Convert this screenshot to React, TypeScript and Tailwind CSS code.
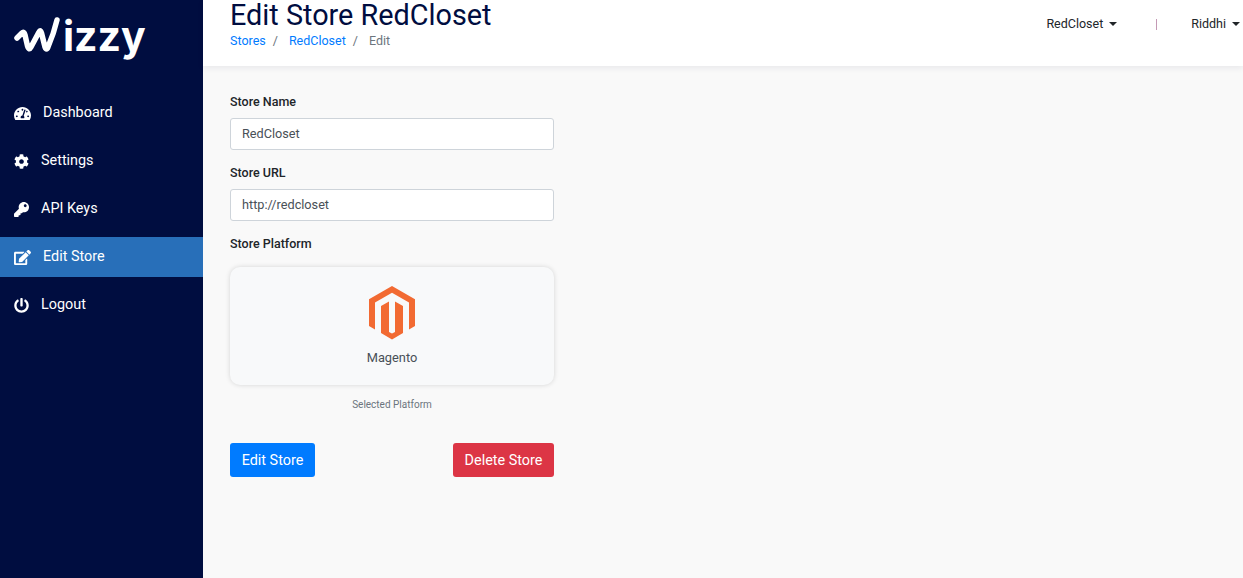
import { FaCog, FaEdit, FaKey, FaPowerOff, FaTachometerAlt } from "react-icons/fa";

const links = [
  { label: "Dashboard", icon: FaTachometerAlt, size: "text-[17px]" },
  { label: "Settings", icon: FaCog, size: "text-[15px]" },
  { label: "API Keys", icon: FaKey, size: "text-[15px]" },
  { label: "Edit Store", icon: FaEdit, size: "text-[17px]", active: true },
  { label: "Logout", icon: FaPowerOff, size: "text-[15px]" },
];

const Logo = () => (
  <div className="flex h-[93px] items-start pl-[14px] pt-[16px]">
    <svg width="50" height="40" viewBox="0 0 50 40" className="shrink-0" fill="none">
      <path
        d="M3 22 Q6 19 8 17 Q10 15 11 19 L13.500 30 Q15 35 17 31 L25 16 Q26.500 13 27.500 17 L31 31 Q32.500 35 34 31 Q40 17 43 4"
        stroke="white"
        strokeWidth="5.500"
        strokeLinecap="round"
        strokeLinejoin="round"
      />
    </svg>
    <span className="-ml-[1px] -mt-[8px] font-['Inter',sans-serif] text-[41px] font-bold leading-[56px] text-white">
      izzy
    </span>
  </div>
);

const Sidebar = () => (
  <div className="flex h-[578px] w-[203px] shrink-0 flex-col bg-[#000d40]">
    <Logo />
    <div className="flex flex-col">
      {links.map((link) => {
        const Icon = link.icon;
        return (
          <div
            key={link.label}
            className={`mb-2 flex h-[40px] items-center gap-3 pl-[14px] text-[14.400px] text-white ${
              link.active ? "bg-[#286fb9]" : ""
            }`}
          >
            <Icon className={link.size} />
            <span>{link.label}</span>
          </div>
        );
      })}
    </div>
  </div>
);

const Field = ({ label, value }: { label: string; value: string }) => (
  <div className="mb-[13px]">
    <div className="mb-[7px] pt-px text-[12.500px] font-medium leading-[18px] text-[#212529]">{label}</div>
    <div className="flex h-[32px] items-center rounded-[3px] border border-[#ced4da] bg-white px-[11px] text-[12.700px] text-[#495057]">
      {value}
    </div>
  </div>
);

const Caret = () => (
  <span className="ml-[6px] h-0 w-0 border-x-[4px] border-t-[4px] border-x-transparent border-t-[#212529]" />
);

const App = () => {
  return (
    <div className="flex h-[578px] w-[1243px] overflow-hidden bg-[#f9f9f9] font-['Roboto',sans-serif]">
      <Sidebar />
      <div className="flex-1">
        <div className="flex h-[66px] items-start justify-between bg-white pl-[27px] shadow-[0_2px_6px_rgba(20,20,60,0.08)]">
          <div>
            <h1 className="text-[28.800px] leading-[30px] text-[#000d40]">Edit Store RedCloset</h1>
            <div className="mt-[2px] flex text-[12.500px] leading-[18px]">
              <span className="text-[#007bff]">Stores</span>
              <span className="ml-[7px] text-[#6c757d]">/</span>
              <span className="ml-[11px] text-[#007bff]">RedCloset</span>
              <span className="ml-[7px] text-[#6c757d]">/</span>
              <span className="ml-[11px] text-[#6c757d]">Edit</span>
            </div>
          </div>
          <div className="flex items-center pr-[3px] pt-[15px] text-[12.500px] leading-[18px] text-[#212529]">
            <span>RedCloset</span>
            <Caret />
            <span className="ml-[39px] h-[11px] w-px bg-[#c49ab5]" />
            <span className="ml-[34px]">Riddhi</span>
            <Caret />
          </div>
        </div>
        <div className="ml-[27px] w-[324px] pt-[26px]">
          <Field label="Store Name" value="RedCloset" />
          <Field label="Store URL" value="http://redcloset" />
          <div className="mb-[14px] pt-px text-[12.500px] font-medium leading-[18px] text-[#212529]">Store Platform</div>
          <div className="flex h-[118px] w-[324px] flex-col items-center rounded-[10px] bg-[#f8f9fa] pt-[19px] shadow-[0_0_5px_rgba(0,0,0,0.15)]">
            <svg width="48" height="54" viewBox="0 0 48 54">
              <path
                fill="#f26a32"
                d="M24 0 L47 13.300 V40 L41 43.500 V16.500 L24 6.800 L7 16.500 V43.500 L1 40 V13.300 Z M13 20 L21 15.500 V46 L24 47.500 L27 46 V15.500 L35 20 V47 L24 53.500 L13 47 Z"
              />
            </svg>
            <div className="mt-[9px] text-[12.800px] leading-[18px] text-[#495057]">Magento</div>
          </div>
          <div className="mt-[12px] text-center text-[10px] leading-[15px] text-[#6c757d]">Selected Platform</div>
          <div className="mt-[31px] flex justify-between">
            <button className="h-[34px] w-[85px] rounded-[3px] bg-[#007bff] pt-px text-[14.400px] text-white">Edit Store</button>
            <button className="h-[34px] w-[101px] rounded-[3px] bg-[#dc3545] pt-px text-[14.400px] text-white">Delete Store</button>
          </div>
        </div>
      </div>
    </div>
  );
};

export default App;
